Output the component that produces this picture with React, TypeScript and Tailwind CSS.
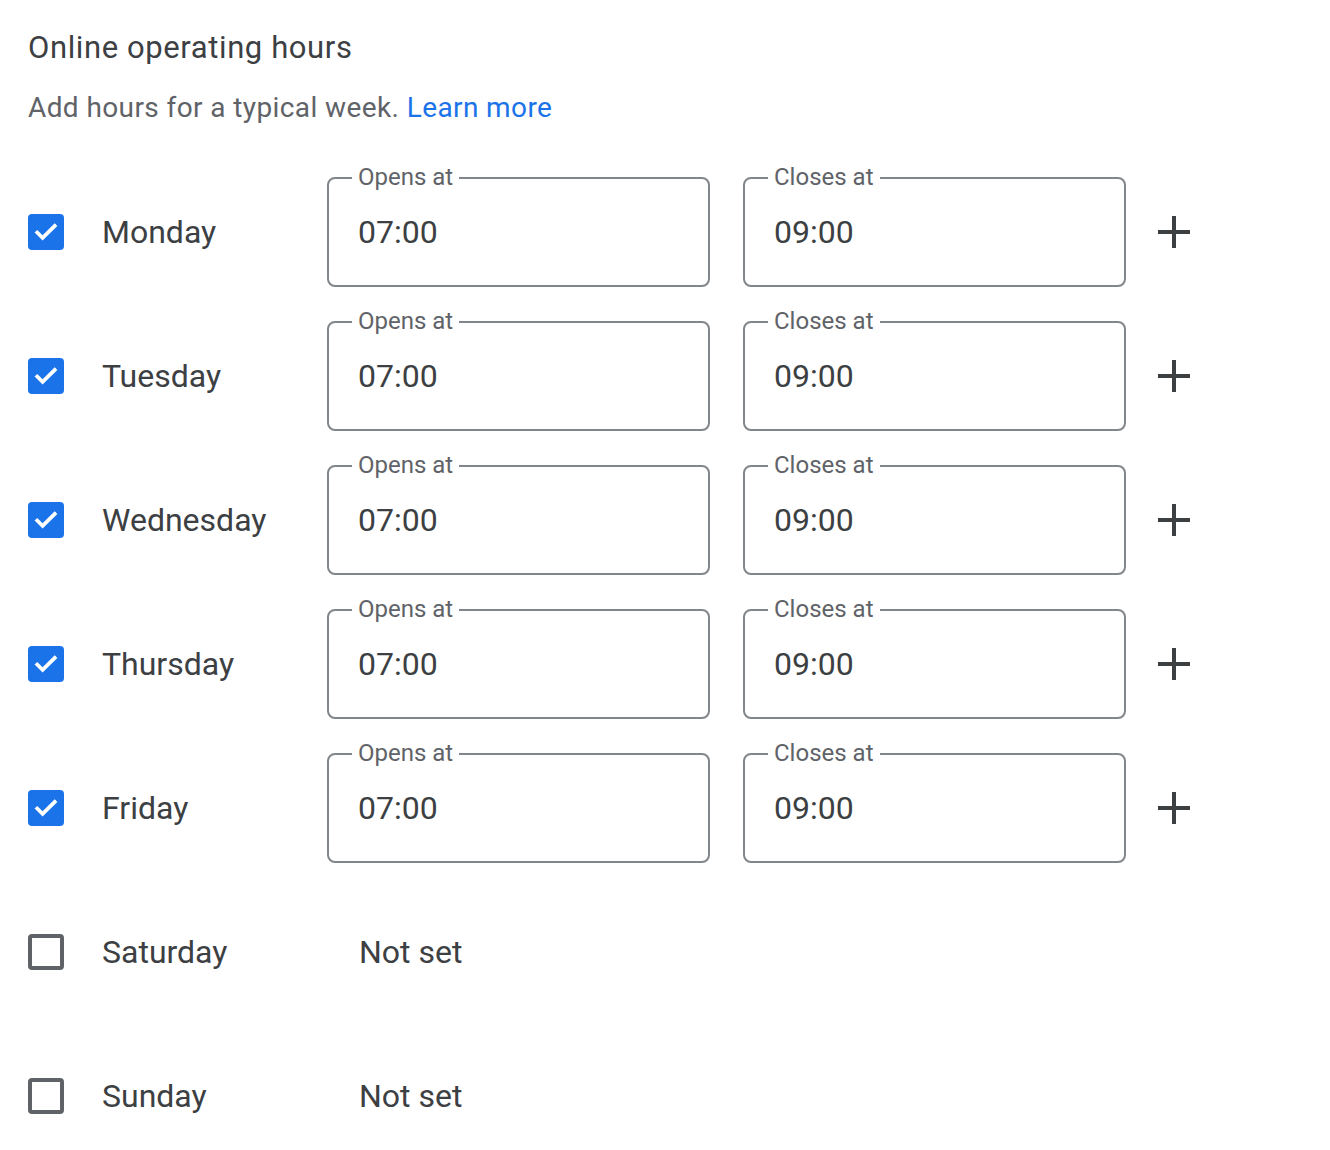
import React from 'react';

const days = [
  { name: 'Monday', on: true },
  { name: 'Tuesday', on: true },
  { name: 'Wednesday', on: true },
  { name: 'Thursday', on: true },
  { name: 'Friday', on: true },
  { name: 'Saturday', on: false },
  { name: 'Sunday', on: false },
];

function Checkbox({ checked }: { checked: boolean }) {
  if (checked) {
    return (
      <div className="w-[36px] h-[36px] rounded-[4px] bg-[#1a73e8] flex items-center justify-center shrink-0">
        <svg width="28" height="28" viewBox="0 0 24 24" fill="none">
          <path d="M4.5 12.5l4.6 4.6L19.5 6.8" stroke="#fff" strokeWidth="3.2" strokeLinecap="square" />
        </svg>
      </div>
    );
  }
  return <div className="w-[36px] h-[36px] rounded-[4px] border-[4px] border-[#5f6368] shrink-0" />;
}

function TimeField({ label, value }: { label: string; value: string }) {
  return (
    <div className="relative w-[383px] h-[110px] border-2 border-[#80868b] rounded-[8px] flex items-center pl-[29px]">
      <span className="absolute left-[23px] top-[-16px] bg-white px-[6px] text-[24px] leading-[28px] text-[#5f6368]">{label}</span>
      <span className="text-[32px] text-[#3c4043]">{value}</span>
    </div>
  );
}

export default function App() {
  return (
    <div className="min-h-screen bg-white font-['Roboto',sans-serif] pl-[28px]">
      <div className="pt-[28px] h-[68px] text-[31px] tracking-[0.6px] leading-[40px] text-[#3c4043]">Online operating hours</div>
      <div className="mt-[20px] h-[40px] text-[28px] tracking-[0.4px] leading-[40px] text-[#5f6368]">
        Add hours for a typical week. <span className="text-[#1a73e8]">Learn more</span>
      </div>
      <div className="mt-[32px] flex flex-col">
        {days.map((d) => (
          <div key={d.name} className="h-[144px] flex items-center">
            <Checkbox checked={d.on} />
            <div className="w-[263px] pl-[38px] text-[32px] text-[#3c4043]">{d.name}</div>
            {d.on ? (
              <div className="flex items-center">
                <TimeField label="Opens at" value="07:00" />
                <div className="w-[33px]" />
                <TimeField label="Closes at" value="09:00" />
                <svg className="ml-[32px]" width="32" height="32" viewBox="0 0 32 32">
                  <rect x="14" y="0" width="4" height="32" fill="#3c4043" />
                  <rect x="0" y="14" width="32" height="4" fill="#3c4043" />
                </svg>
              </div>
            ) : (
              <div className="pl-[32px] text-[32px] text-[#3c4043]">Not set</div>
            )}
          </div>
        ))}
      </div>
    </div>
  );
}
